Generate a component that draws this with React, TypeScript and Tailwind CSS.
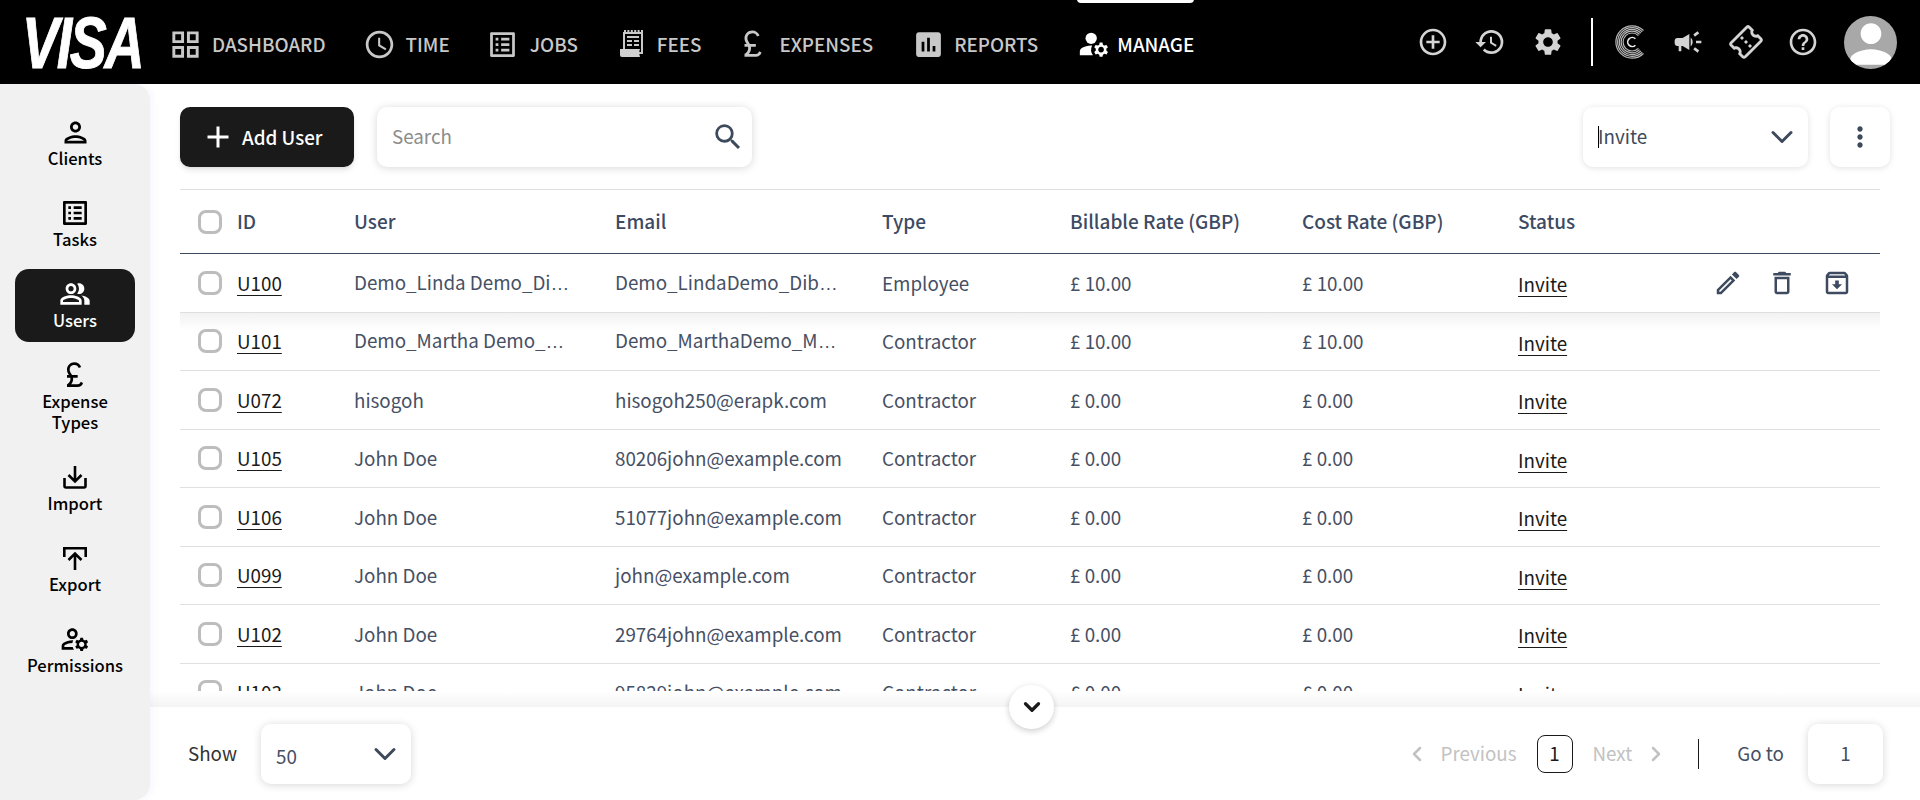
import { ChevronDown, ChevronLeft, ChevronRight } from "lucide-react";
import {
  MdOutlineGridView,
  MdOutlineAccessTime,
  MdOutlineListAlt,
  MdCurrencyPound,
  MdAssessment,
  MdManageAccounts,
  MdAddCircleOutline,
  MdHistory,
  MdSettings,
  MdCampaign,
  MdOutlineConfirmationNumber,
  MdHelpOutline,
  MdPerson,
  MdOutlinePerson,
  MdOutlinePeopleAlt,
  MdOutlineManageAccounts,
  MdOutlineEdit,
  MdOutlineDelete,
  MdOutlineArchive,
  MdAdd,
  MdSearch,
  MdMoreVert,
} from "react-icons/md";

const font = { fontFamily: '"Noto Sans CJK SC", "Noto Sans", sans-serif' };

const FeesIcon = () => (
  <svg viewBox="0 0 26 28" className="w-[26px] h-[28px] shrink-0" fill="none">
    <path d="M5 1h19" stroke="#c8c8c8" strokeWidth="2" strokeDasharray="2 1.4" />
    <path d="M5 3h18v20H5z" stroke="#c8c8c8" strokeWidth="2" />
    <path d="M8 7h12M8 11h5M15 11h5M8 15h5M15 15h5" stroke="#c8c8c8" strokeWidth="2" />
    <path d="M1 19h20c-1 2-1 5 0 8H3a2 2 0 0 1-2-2z" fill="#d0d0d0" />
  </svg>
);

const CLogo = () => (
  <svg viewBox="0 0 34 34" className="w-[34px] h-[34px] shrink-0" fill="none" stroke="#b8b8b8" strokeWidth="1.2">
    <path d="M28.5 5.5a16.2 16.2 0 1 0 0 23" />
    <path d="M27.2 6.8a14.4 14.4 0 1 0 0 20.4" />
    <path d="M25.9 8.1a12.6 12.6 0 1 0 0 17.8" />
    <path d="M24.6 9.4a10.8 10.8 0 1 0 0 15.2" />
    <path d="M23.4 10.6a9 9 0 1 0 0 12.8" />
    <path d="M20.4 13.8a4.5 4.5 0 1 0 0 6.4" strokeWidth="1.6" stroke="#f0f0f0" />
  </svg>
);

const ImportIcon = () => (
  <svg viewBox="0 0 24 23" className="w-6 h-[23px]" fill="none" stroke="currentColor" strokeWidth="2.6">
    <path d="M1.5 12v8a1.5 1.5 0 0 0 1.5 1.5h18a1.5 1.5 0 0 0 1.5-1.5v-8" />
    <path d="M12 0v15M5.5 9 12 15.5 18.5 9" />
  </svg>
);

const ExportIcon = () => (
  <svg viewBox="0 0 24 23" className="w-6 h-[23px]" fill="none" stroke="currentColor" strokeWidth="2.6">
    <path d="M1.3 10V1.3h21.4V10" />
    <path d="M12 23V7M5.5 13 12 6.5 18.5 13" />
  </svg>
);

const navItems = [
  { label: "DASHBOARD", icon: <MdOutlineGridView size={35} className="shrink-0" />, box: "w-[26px] mr-[14px]" },
  { label: "TIME", icon: <MdOutlineAccessTime size={33} className="shrink-0 -translate-x-px" />, box: "w-[27px] mr-3" },
  { label: "JOBS", icon: <MdOutlineListAlt size={33} className="shrink-0 -translate-x-px" />, box: "w-[25px] mr-[14px]" },
  { label: "FEES", icon: <FeesIcon />, box: "w-[26px] mr-3" },
  { label: "EXPENSES", icon: <MdCurrencyPound size={34} className="shrink-0 translate-x-[2px]" />, box: "w-[18px] mr-[19px]" },
  { label: "REPORTS", icon: <MdAssessment size={33} className="shrink-0 translate-x-[2px]" />, box: "w-[25px] mr-[15px]" },
];

const sideItems = [
  { label: "Clients", icon: <MdOutlinePerson size={33} /> },
  { label: "Tasks", icon: <MdOutlineListAlt size={32} /> },
  { label: "Users", icon: <MdOutlinePeopleAlt size={32} />, active: true },
  { label: "Expense Types", icon: <MdCurrencyPound size={32} /> },
  { label: "Import", icon: <ImportIcon /> },
  { label: "Export", icon: <ExportIcon /> },
  { label: "Permissions", icon: <MdOutlineManageAccounts size={32} /> },
];

const rows = [
  ["U100", "Demo_Linda Demo_Di…", "Demo_LindaDemo_Dib…", "Employee", "£ 10.00", "£ 10.00"],
  ["U101", "Demo_Martha Demo_…", "Demo_MarthaDemo_M…", "Contractor", "£ 10.00", "£ 10.00"],
  ["U072", "hisogoh", "hisogoh250@erapk.com", "Contractor", "£ 0.00", "£ 0.00"],
  ["U105", "John Doe", "80206john@example.com", "Contractor", "£ 0.00", "£ 0.00"],
  ["U106", "John Doe", "51077john@example.com", "Contractor", "£ 0.00", "£ 0.00"],
  ["U099", "John Doe", "john@example.com", "Contractor", "£ 0.00", "£ 0.00"],
  ["U102", "John Doe", "29764john@example.com", "Contractor", "£ 0.00", "£ 0.00"],
  ["U103", "John Doe", "95829john@example.com", "Contractor", "£ 0.00", "£ 0.00"],
];

const gridCols = "grid grid-cols-[39px_117px_261px_267px_188px_232px_216px_1fr] items-center pl-[18px]";

const Checkbox = () => <div className="w-6 h-6 rounded-lg border-[3px] border-[#bdbdbd] bg-white" />;

// the cjk font centres its ellipsis, the reference sits on the baseline
const Clipped = ({ text }: { text: string }) =>
  text.endsWith("…") ? (
    <div className="whitespace-nowrap">
      {text.slice(0, -1)}
      <span className="font-['Liberation_Sans']">…</span>
    </div>
  ) : (
    <div className="whitespace-nowrap">{text}</div>
  );

function Header() {
  return (
    <header className="h-[84px] bg-black flex items-center shrink-0 pl-5 pr-[23px]">
      <div className="w-[120px] h-[52px] flex items-center justify-center">
        <span
          className="text-white italic font-bold text-[73px] leading-none tracking-[-3px] scale-x-[0.76] ml-1 whitespace-nowrap [-webkit-text-stroke:1px_white]"
          style={{ fontFamily: '"Liberation Sans", sans-serif' }}
        >
          VISA
        </span>
      </div>
      <nav className="flex items-center gap-[41px] ml-8 pt-1 text-[#c8c8c8] text-[18.8px] font-medium">
        {navItems.map((n) => (
          <div key={n.label} className="flex items-center">
            <span className={`${n.box} flex justify-center`}>{n.icon}</span>
            <span>{n.label}</span>
          </div>
        ))}
        <div className="relative -ml-[2px] flex items-center gap-[6px] text-white">
          <div className="absolute -top-[29px] left-0 right-0 h-[5px] bg-white rounded-b" />
          <MdManageAccounts size={34} />
          <span>MANAGE</span>
        </div>
      </nav>
      <div className="ml-auto flex items-center text-[#d4d4d4]">
        <MdAddCircleOutline size={32} />
        <MdHistory size={32} className="ml-[25px]" />
        <MdSettings size={32} className="ml-[26px]" />
        <div className="w-[2px] h-12 bg-white ml-[27px]" />
        <div className="ml-[22px]">
          <CLogo />
        </div>
        <MdCampaign size={32} className="ml-[23px]" />
        <MdOutlineConfirmationNumber size={34} className="ml-[25px] -rotate-45" />
        <MdHelpOutline size={32} className="ml-[24px]" />
        <div className="w-[53px] h-[53px] rounded-full bg-[#a8a8a8] ml-[25px] overflow-hidden flex items-center justify-center text-white">
          <MdPerson size={62} className="mt-1 shrink-0" />
        </div>
      </div>
    </header>
  );
}

function Sidebar() {
  return (
    <aside className="w-[150px] shrink-0 bg-[#f1f1f1] rounded-tr-2xl rounded-br-2xl px-[15px] pt-[23px] flex flex-col gap-2 shadow-[3px_0_6px_rgba(120,120,255,0.06)] relative z-10">
      {sideItems.map((s) => (
        <div
          key={s.label}
          className={`w-[120px] min-h-[73px] rounded-[14px] flex flex-col items-center pt-[9px] pb-[11px] text-[16.6px] font-medium leading-[21px] text-center ${
            s.active ? "bg-[#1a1a1a] text-white" : "text-black"
          }`}
        >
          <div className="h-[32px] flex items-center justify-center">{s.icon}</div>
          <div className="px-4">{s.label}</div>
        </div>
      ))}
    </aside>
  );
}

function Toolbar() {
  return (
    <div className="h-[105px] shrink-0 pt-[23px] pr-[30px] pl-[30px] flex items-start text-[18.8px]">
      <button className="w-[174px] h-[60px] rounded-[10px] bg-[#1a1a1a] text-white flex items-center pl-5 gap-[6px] font-medium shadow-md">
        <MdAdd size={36} />
        Add User
      </button>
      <div className="w-[375px] h-[60px] ml-[23px] rounded-[10px] bg-white shadow-[0_1px_8px_rgba(0,0,0,0.16)] flex items-center pl-[15px] pr-[7px]">
        <span className="text-[#8c8c8c] flex-1 -mt-px">Search</span>
        <MdSearch size={34} className="text-[#3d4a5c]" />
      </div>
      <div className="ml-auto w-[225px] h-[60px] rounded-[10px] bg-white shadow-[0_1px_6px_rgba(0,0,0,0.12)] flex items-center pl-[15px] pr-[8px] text-[#3d4a5c]">
        <span className="w-px h-[22px] bg-black" />
        <span className="flex-1 -mt-px -ml-px">Invite</span>
        <ChevronDown size={36} strokeWidth={2} className="text-[#3d4a5c]" />
      </div>
      <div className="ml-[22px] w-[60px] h-[60px] rounded-[10px] bg-white shadow-[0_1px_6px_rgba(0,0,0,0.12)] flex items-center justify-center">
        <MdMoreVert size={32} className="text-[#3d4a5c]" />
      </div>
    </div>
  );
}

function Table() {
  return (
    <div className="flex-1 min-h-0 overflow-hidden pl-[30px] pr-10">
      <div className={`${gridCols} h-[65px] border-t border-b border-t-[#e0e0e0] border-b-[#3e4a5f] text-[19px] font-medium text-[#3d4a63]`}>
        <Checkbox />
        <div className="-mt-px">ID</div>
        <div className="-mt-px">User</div>
        <div className="-mt-px">Email</div>
        <div className="-mt-px">Type</div>
        <div className="-mt-px">Billable Rate (GBP)</div>
        <div className="-mt-px">Cost Rate (GBP)</div>
        <div className="-mt-px">Status</div>
      </div>
      {rows.map((r, i) => (
        <div
          key={r[0]}
          className={`${gridCols} h-[58.5px] border-b border-[#e0e0e0] text-[18.8px] text-[#465064] ${
            i === 1 ? "bg-gradient-to-b from-[#f2f2f2] to-white to-30%" : ""
          }`}
        >
          <Checkbox />
          <div className="text-[#1a1a1a] underline underline-offset-4">{r[0]}</div>
          <Clipped text={r[1]} />
          <Clipped text={r[2]} />
          <div>{r[3]}</div>
          <div>{r[4]}</div>
          <div>{r[5]}</div>
          <div className="flex items-center">
            <span className="text-[#1a1a1a] underline underline-offset-4 mt-[3px]">Invite</span>
            {i === 0 && (
              <div className="ml-auto mr-[28px] mt-px flex items-center gap-6 text-[#3e4a5f]">
                <MdOutlineEdit size={30} />
                <MdOutlineDelete size={30} />
                <MdOutlineArchive size={30} className="ml-px" />
              </div>
            )}
          </div>
        </div>
      ))}
    </div>
  );
}

function Footer() {
  return (
    <div className="relative shrink-0">
      <div className="h-4 bg-gradient-to-b from-white to-[#f4f4f4]" />
      <button className="absolute left-[859px] top-[-6px] w-[45px] h-[44px] rounded-full bg-white shadow-[0_2px_6px_rgba(0,0,0,0.2)] flex items-center justify-center z-10">
        <ChevronDown size={26} strokeWidth={3} className="text-[#1a1a1a]" />
      </button>
      <div className="h-[93px] bg-white flex items-center pl-[38px] pr-[37px] text-[18.8px]">
        <span className="text-[#333]">Show</span>
        <div className="ml-6 w-[150px] h-[60px] rounded-[10px] bg-white shadow-[0_1px_8px_rgba(0,0,0,0.16)] flex items-center pl-[15px] pr-[8px] text-[#465064]">
          <span className="flex-1 mt-[6px]">50</span>
          <ChevronDown size={36} strokeWidth={2} className="text-[#3d4a5c]" />
        </div>
        <div className="ml-auto flex items-center text-[#c2c2c2]">
          <ChevronLeft size={24} strokeWidth={2.5} />
          <span className="ml-3">Previous</span>
          <span className="ml-5 w-9 h-[38px] rounded-lg border border-[#1a1a1a] text-[#1a1a1a] flex items-center justify-center">1</span>
          <span className="ml-5">Next</span>
          <ChevronRight size={24} strokeWidth={2.5} className="ml-3" />
          <div className="ml-[30px] w-px h-[30px] bg-[#1a1a1a]" />
          <span className="ml-[38px] text-[#465064]">Go to</span>
          <div className="ml-6 w-[75px] h-[60px] rounded-[10px] bg-white shadow-[0_1px_8px_rgba(0,0,0,0.16)] flex items-center justify-center text-[#465064]">
            1
          </div>
        </div>
      </div>
    </div>
  );
}

export default function App() {
  return (
    <div className="h-[800px] w-[1920px] flex flex-col overflow-hidden bg-white" style={font}>
      <Header />
      <div className="flex-1 min-h-0 flex">
        <Sidebar />
        <main className="flex-1 min-w-0 flex flex-col">
          <Toolbar />
          <Table />
          <Footer />
        </main>
      </div>
    </div>
  );
}
